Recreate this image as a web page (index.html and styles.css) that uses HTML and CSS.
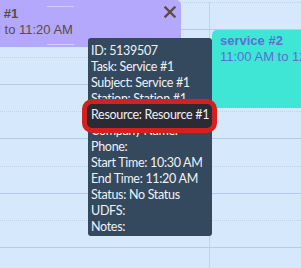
FILE: index.html
```html
<!DOCTYPE html>
<html lang="en">
<head>
    <meta charset="UTF-8">
    <title>Scheduler tooltip</title>
    <link rel="stylesheet" href="styles.css">
</head>
<body>
    <div class="calendar">
        <div class="column first">
            <div class="slot dotted"></div>
            <div class="slot"></div>
            <div class="slot dotted"></div>
            <div class="slot"></div>
            <div class="slot dotted"></div>
            <div class="slot"></div>
            <div class="slot dotted"></div>
            <div class="slot"></div>
            <div class="slot dotted"></div>
            <div class="slot"></div>

            <div class="event event-purple">
                <div class="ev-title">Service #1</div>
                <div class="ev-time">10:30 AM to 11:20 AM</div>
                <span class="handle handle-top"></span>
                <span class="handle handle-bottom"></span>
                <svg class="close" width="12" height="12" viewBox="0 0 12 12">
                    <path d="M1.5 1.5 L10.5 10.5 M10.5 1.5 L1.5 10.5" stroke="#5a4c40" stroke-width="2.3" stroke-linecap="square"/>
                </svg>
            </div>
        </div>
        <div class="column second">
            <div class="slot dotted"></div>
            <div class="slot"></div>
            <div class="slot dotted"></div>
            <div class="slot"></div>
            <div class="slot dotted"></div>
            <div class="slot"></div>
            <div class="slot dotted"></div>
            <div class="slot"></div>
            <div class="slot dotted"></div>
            <div class="slot"></div>

            <div class="event event-teal">
                <div class="ev-title">service #2</div>
                <div>11:00 AM to 12:00 PM</div>
            </div>
        </div>

        <div class="tooltip">
            <div>ID: 5139507</div>
            <div>Task: Service #1</div>
            <div>Subject: Service #1</div>
            <div>Station: Station #1</div>
            <div class="highlight">Resource: Resource #1</div>
            <div>Company Name:</div>
            <div>Phone:</div>
            <div>Start Time: 10:30 AM</div>
            <div>End Time: 11:20 AM</div>
            <div>Status: No Status</div>
            <div>UDFS:</div>
            <div>Notes:</div>
        </div>
    </div>
</body>
</html>
```
FILE: styles.css
```css
body {
    margin: 0;
    background-color: #d5e8fc;
    font-family: "Liberation Sans", Arial, sans-serif;
    overflow: hidden;
}
.calendar {
    position: relative;
    display: grid;
    grid-template-columns: 209px 1fr;
    width: 301px;
    height: 268px;
    padding-top: 2px;
    box-sizing: border-box;
}
.column {
    position: relative;
}
.column.second {
    border-left: 1px solid #c0d3ea;
}
.slot {
    height: 27.25px;
    box-sizing: border-box;
    border-top: 1px solid #b5cae4;
}
.slot.dotted {
    border-top: 1px dotted #bfd2ea;
}
.event {
    position: absolute;
    box-sizing: border-box;
    font-size: 13px;
    line-height: 16px;
    overflow: hidden;
    white-space: nowrap;
}
.ev-title {
    font-weight: bold;
}
.event-purple {
    top: -2px;
    left: 0;
    width: 181px;
    height: 47px;
    padding-top: 6px;
    background-color: #b3a8fb;
    color: #5a4c40;
    border-top-right-radius: 5px;
}
.event-purple .ev-title {
    margin-left: -46px;
}
.event-purple .ev-time {
    margin-left: -54px;
}
.handle {
    position: absolute;
    left: 47px;
    width: 27px;
    height: 1px;
    background-color: #d3ccfd;
}
.handle-top {
    top: 6px;
}
.handle-bottom {
    bottom: 2px;
}
.close {
    position: absolute;
    top: 6px;
    left: 164px;
}
.event-teal {
    top: 28px;
    left: 2px;
    right: 0;
    height: 78px;
    padding: 3px 0 0 8px;
    background-color: #3fe6d6;
    color: #5a6fd6;
    border-top-left-radius: 5px;
}
.tooltip {
    position: absolute;
    top: 38px;
    left: 88px;
    width: 124px;
    height: 198px;
    box-sizing: border-box;
    padding: 5px 3px 0 3px;
    background-color: #34495e;
    color: #eef2f6;
    border-radius: 3px;
    font-family: Lato, "Open Sans", sans-serif;
    font-size: 12.5px;
    letter-spacing: -0.3px;
    line-height: 16px;
    white-space: nowrap;
}
.highlight {
    position: relative;
    z-index: 1;
}
.highlight::before {
    content: "";
    position: absolute;
    top: -8px;
    bottom: -10px;
    left: -9px;
    right: -8px;
    z-index: -1;
    background-color: #2b2b35;
    border: 5px solid #d61f1f;
    border-radius: 10px;
}
```
